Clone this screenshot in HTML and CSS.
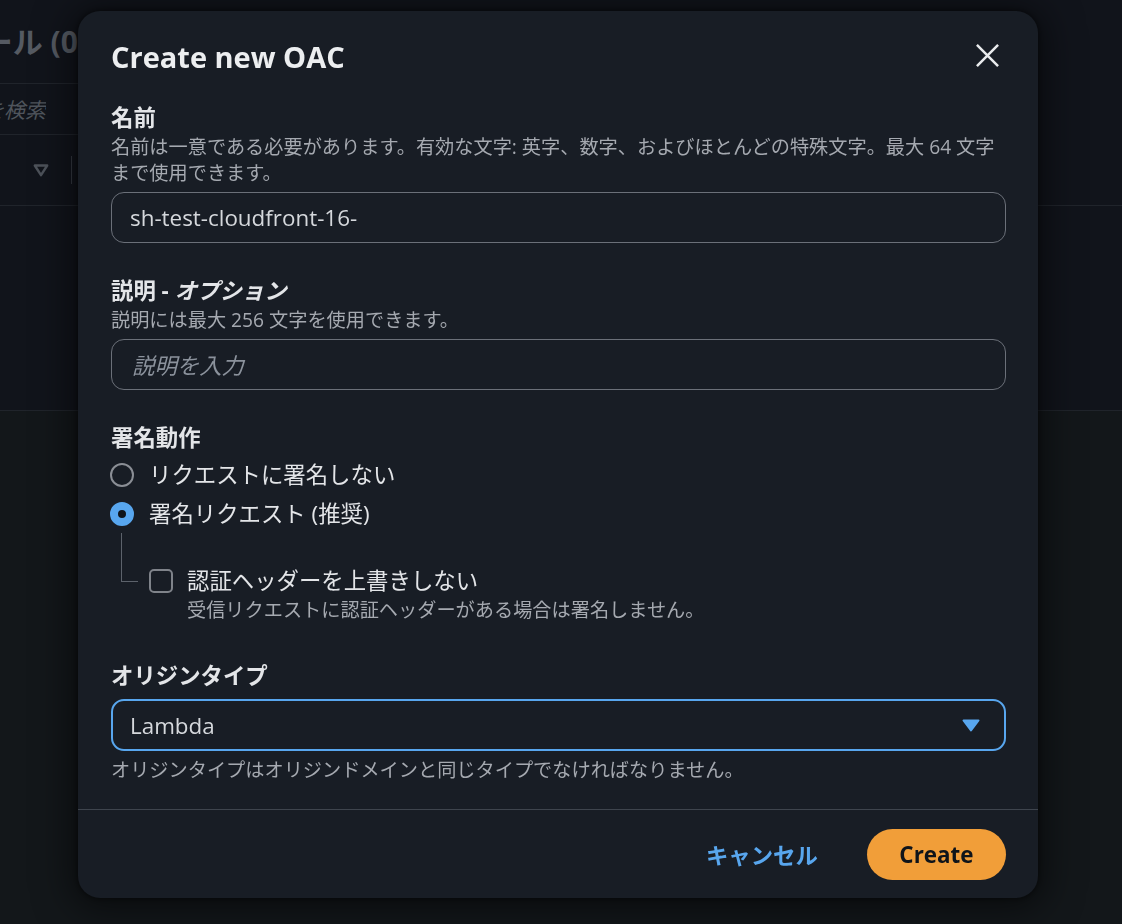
FILE: index.html
```html
<!DOCTYPE html>
<html lang="ja">
<head>
<meta charset="utf-8">
<title>Create new OAC</title>
<link rel="stylesheet" href="styles.css">
</head>
<body>
<div class="page">
  <div class="page-header">
    <div class="title-clip"><h1 class="page-title">オリジンアクセスコントロール (0)</h1></div>
  </div>
  <div class="search-row">
    <div class="search-clip"><span class="search-placeholder">コントロールを検索</span></div>
  </div>
  <div class="table-head">
    <svg class="sort-icon" viewBox="0 0 16 13" aria-hidden="true"><polygon points="1.8,1.5 14.2,1.5 8,11.2" fill="none" stroke="#4d525a" stroke-width="2.4" stroke-linejoin="round"/></svg>
    <span class="col-divider"></span>
  </div>
  <div class="table-empty"></div>
  <div class="page-lower"></div>
</div>

<div class="overlay">
  <div class="modal" role="dialog" aria-label="Create new OAC">
    <div class="modal-header">
      <h2 class="modal-title">Create new OAC</h2>
      <button class="close-btn" aria-label="閉じる">
        <svg viewBox="0 0 26 26" aria-hidden="true"><path d="M2 2 L24 24 M24 2 L2 24" stroke="#e9ebed" stroke-width="2.6" fill="none"/></svg>
      </button>
    </div>

    <div class="modal-body">
      <div class="field">
        <div class="label">名前</div>
        <div class="desc">名前は一意である必要があります。有効な文字: 英字、数字、およびほとんどの特殊文字。最大 64 文字まで使用できます。</div>
        <div class="input">sh-test-cloudfront-16-</div>
      </div>

      <div class="field">
        <div class="label">説明 - <i>オプション</i></div>
        <div class="desc">説明には最大 256 文字を使用できます。</div>
        <div class="input placeholder">説明を入力</div>
      </div>

      <div class="field field-radio">
        <div class="label">署名動作</div>
        <div class="radio-row first">
          <span class="radio"></span>
          <span class="radio-text">リクエストに署名しない</span>
        </div>
        <div class="radio-row">
          <span class="radio checked"></span>
          <span class="radio-text">署名リクエスト (推奨)</span>
        </div>
        <div class="nested">
          <span class="connector"></span>
          <div class="check-group">
            <div class="check-row">
              <span class="checkbox"></span>
              <span class="check-text">認証ヘッダーを上書きしない</span>
            </div>
            <div class="desc check-desc">受信リクエストに認証ヘッダーがある場合は署名しません。</div>
          </div>
        </div>
      </div>

      <div class="field">
        <div class="label">オリジンタイプ</div>
        <div class="select">
          <span class="select-value">Lambda</span>
          <svg class="caret" viewBox="0 0 18 13" aria-hidden="true"><polygon points="1.5,1.5 16.5,1.5 9,11.5" fill="#58a6ee" stroke="#58a6ee" stroke-width="2" stroke-linejoin="round"/></svg>
        </div>
        <div class="desc constraint">オリジンタイプはオリジンドメインと同じタイプでなければなりません。</div>
      </div>
    </div>

    <div class="modal-footer">
      <button class="btn btn-link">キャンセル</button>
      <button class="btn btn-primary">Create</button>
    </div>
  </div>
</div>
</body>
</html>
```

FILE: styles.css
```css
* { box-sizing: border-box; }

html, body {
  margin: 0;
  height: 100%;
}

body {
  background: #11141b;
  font-family: "Open Sans", "Noto Sans CJK JP", sans-serif;
  overflow: hidden;
}

/* ---------- background page ---------- */
.page {
  height: 924px;
  display: flex;
  flex-direction: column;
}

.page-header {
  width: 1000px;
  height: 84px;
  flex: none;
  border-bottom: 1px solid #20242b;
  display: flex;
  align-items: center;
}

.title-clip {
  width: 88px;
  flex: none;
  display: flex;
  justify-content: flex-end;
  overflow: hidden;
}

.page-title {
  margin: 0;
  font-size: 30px;
  line-height: 40px;
  font-weight: 700;
  color: #555a62;
  white-space: nowrap;
}

.search-row {
  width: 1000px;
  height: 51px;
  flex: none;
  border-bottom: 1px solid #20242b;
  display: flex;
  align-items: center;
}

.search-clip {
  width: 46px;
  flex: none;
  display: flex;
  justify-content: flex-end;
  overflow: hidden;
}

.search-placeholder {
  font-style: italic;
  font-size: 21px;
  color: #4f545c;
  white-space: nowrap;
}

.table-head {
  height: 71px;
  flex: none;
  border-bottom: 1px solid #20242b;
  display: flex;
  align-items: center;
  padding-left: 33px;
}

.sort-icon {
  width: 16px;
  height: 13px;
  display: block;
}

.col-divider {
  width: 1px;
  height: 28px;
  background: #353941;
  margin-left: 22px;
}

.table-empty {
  height: 205px;
  flex: none;
  border-bottom: 1px solid #20242b;
}

.page-lower {
  flex: 1;
  background: #13171a;
}

/* ---------- modal ---------- */
.overlay {
  position: fixed;
  inset: 0;
  padding: 11px 0 0 78px;
}

.modal {
  width: 960px;
  background: #181d25;
  border-radius: 22px;
  box-shadow: 0 4px 36px 8px rgba(0, 0, 0, 0.5), 0 0 6px rgba(0, 0, 0, 0.6);
  color: #e3e5e8;
}

.modal-header {
  display: flex;
  justify-content: space-between;
  align-items: flex-start;
  padding: 28px 38px 0 33px;
}

.modal-title {
  margin: 0;
  font-size: 29px;
  line-height: 35px;
  font-weight: 700;
  color: #eceef0;
}

.close-btn {
  border: 0;
  background: none;
  padding: 0;
  margin-top: 4px;
  width: 25px;
  height: 25px;
  cursor: pointer;
}

.close-btn svg {
  width: 25px;
  height: 25px;
  display: block;
}

.modal-body {
  padding: 28px 32px 26px 33px;
  display: flex;
  flex-direction: column;
  gap: 32px;
}

.field {
  display: flex;
  flex-direction: column;
}

.field-radio {
  padding-bottom: 6px;
}

.label {
  font-size: 22.4px;
  line-height: 32px;
  font-weight: 700;
  color: #e3e5e8;
}

.label i {
  font-style: italic;
}

.desc {
  font-size: 19.2px;
  line-height: 25.6px;
  color: #a5a9b0;
}

.input {
  margin-top: 6.4px;
  height: 51px;
  border: 1px solid #6b7079;
  border-radius: 13px;
  padding: 0 18px;
  display: flex;
  align-items: center;
  font-size: 22.4px;
  color: #d5d8dc;
}

.input.placeholder {
  font-style: italic;
  color: #8b929c;
  padding-left: 20px;
}

/* radios */
.radio-row {
  display: flex;
  align-items: center;
  height: 32px;
  margin-top: 7px;
}

.radio-row.first {
  margin-top: 5px;
}

.radio {
  width: 24px;
  height: 24px;
  margin-left: -1px;
  border-radius: 50%;
  border: 2px solid #8a8e95;
  flex: none;
}

.radio.checked {
  border: 8px solid #58a6ee;
  background: #0f141a;
}

.radio-text {
  margin-left: 15px;
  font-size: 22.4px;
  line-height: 32px;
  color: #e3e5e8;
}

.nested {
  display: flex;
  align-items: flex-start;
}

.connector {
  flex: none;
  width: 17px;
  height: 49px;
  margin-top: 3px;
  margin-left: 10px;
  border-left: 1px solid #5c626b;
  border-bottom: 1px solid #5c626b;
}

.check-group {
  margin-left: 11px;
  margin-top: 35px;
}

.check-row {
  display: flex;
  align-items: center;
  height: 32px;
}

.checkbox {
  width: 24px;
  height: 24px;
  border: 2px solid #7f838a;
  border-radius: 5px;
  flex: none;
}

.check-text {
  margin-left: 14px;
  font-size: 22.4px;
  line-height: 32px;
  color: #e3e5e8;
}

.check-desc {
  margin-left: 38px;
}

/* select */
.select {
  margin-top: 7px;
  height: 52px;
  border: 2px solid #58a6ee;
  border-radius: 13px;
  padding: 0 24px 0 17px;
  display: flex;
  align-items: center;
  justify-content: space-between;
}

.select-value {
  font-size: 22.4px;
  color: #d5d8dc;
}

.caret {
  width: 18px;
  height: 13px;
  display: block;
}

.constraint {
  margin-top: 6px;
}

/* footer */
.modal-footer {
  border-top: 1px solid #3e444d;
  padding: 19px 32px 18px 33px;
  display: flex;
  justify-content: flex-end;
  align-items: center;
  gap: 14px;
}

.btn {
  font-family: "Open Sans", "Noto Sans CJK JP", sans-serif;
  font-size: 22.4px;
  font-weight: 700;
  height: 51px;
  border-radius: 26px;
  border: 0;
  padding: 0 35px;
  cursor: pointer;
}

.btn-link {
  background: none;
  color: #58a6ee;
}

.btn-primary {
  background: #f19e39;
  color: #0f141a;
  padding: 0 32.5px;
}
```
